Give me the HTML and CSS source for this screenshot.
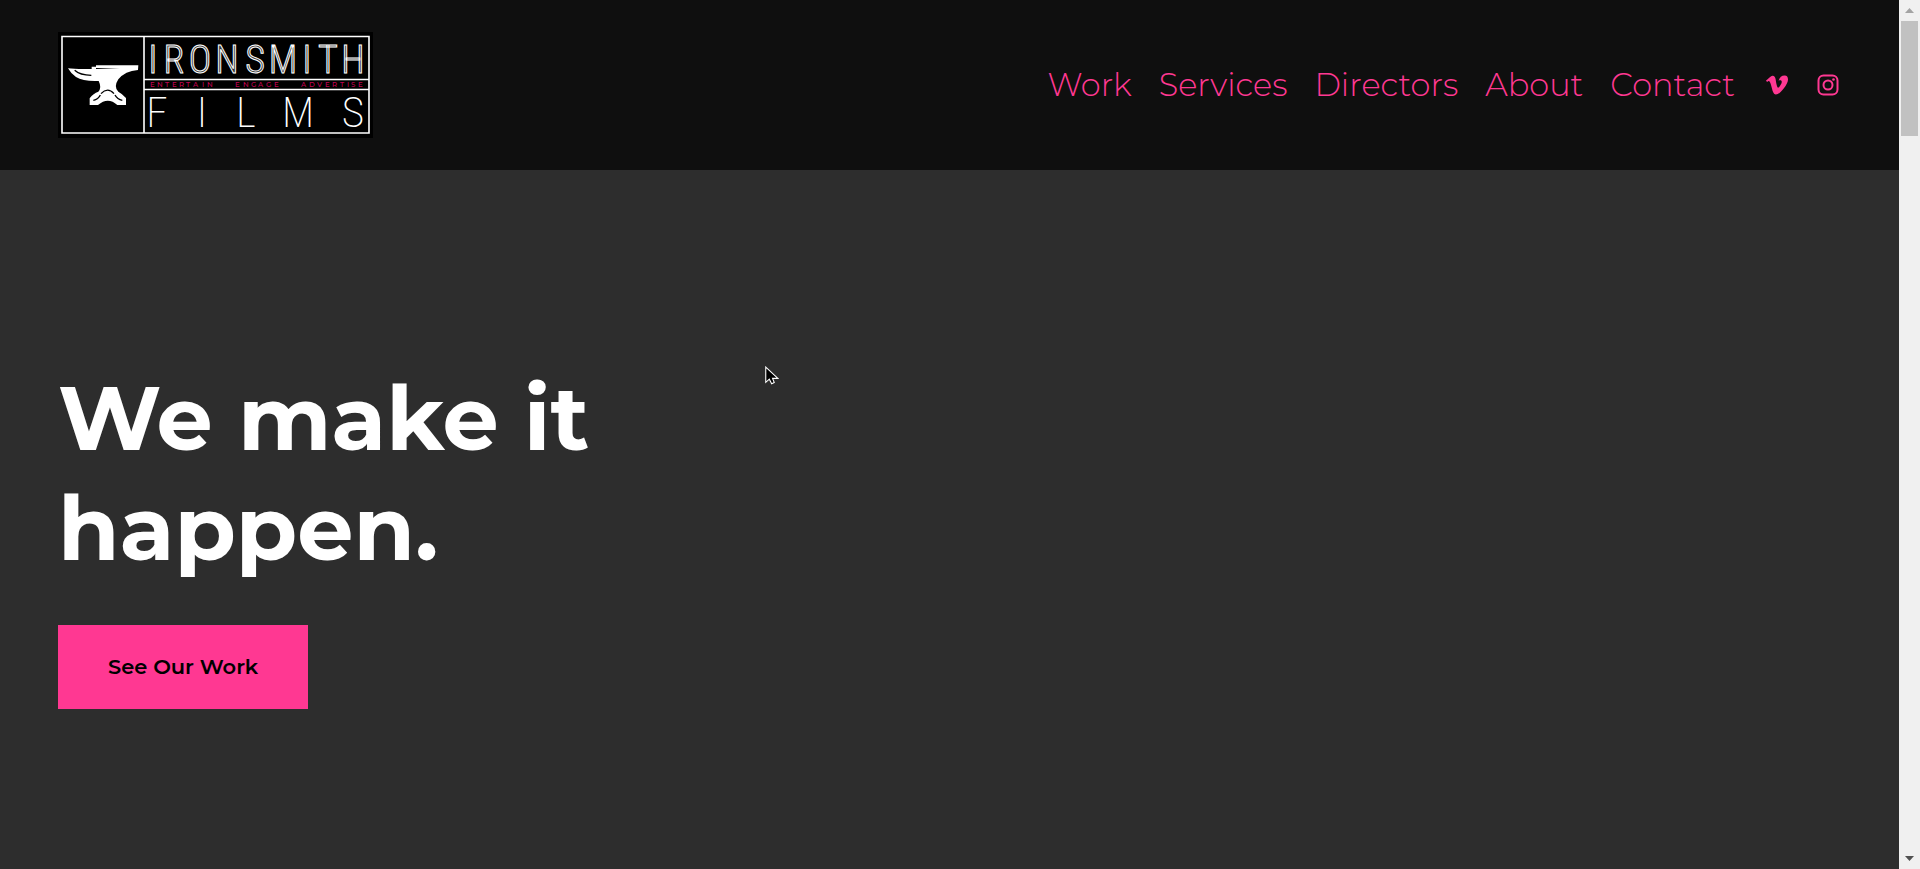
FILE: index.html
```
<!DOCTYPE html>
<html lang="en">
<head>
	<meta charset="UTF-8">
	<meta name="viewport" content="width=device-width, initial-scale=1.0">
	<title>Ironsmith Films</title>
	<link rel="stylesheet" href="styles.css">
</head>
<body>
	<div class="page">
		<header class="header">
			<a class="logo" href="#" aria-label="Ironsmith Films">
				<svg viewBox="0 0 315 106">
					<rect width="315" height="106" fill="#000"/>
					<path d="M4 4.500h307v96.500h-307zM86 4v97M86 47.500h225M86 57.500h225" fill="none" stroke="#fff" stroke-width="1.600"/>
					<!-- anvil -->
					<g transform="scale(.3333) translate(-24 -38)">
						<path fill="#fff" d="M54 147Q75 150 125 149V142H138V138H265L264 152Q225 155 205 180Q190 203 205 217Q218 224 228 236V257H202Q174 231 144 257H119V237Q130 222 145 217Q156 205 146 185Q100 187 78 173Q62 162 54 147Z"/>
						<path fill="none" stroke="#000" stroke-width="4" d="M74 153Q90 168 124 168M130 243Q145 240 151 227M153 223Q173 202 192 223M195 227Q202 240 217 243"/>
						<path d="M138 146L210 149L138 149Z"/>
					</g>
					<text class="logo-name" y="41" x="95 116 142 169 197 225 249 270 295">IRONSMITH</text>
					<text class="logo-tag" y="55" x="92 99 107 114 121 128 135 144 149">ENTERTAIN</text>
					<text class="logo-tag" y="55" x="177 185 193 200 208 216">ENGAGE</text>
					<text class="logo-tag" y="55" x="243 251 259 267 274 282 289 293 300">ADVERTISE</text>
					<text class="logo-films" y="95" x="99 144 188 240 295">FILMS</text>
				</svg>
			</a>
			<nav class="nav">
				<a href="#">Work</a>
				<a href="#">Services</a>
				<a href="#">Directors</a>
				<a href="#">About</a>
				<a href="#">Contact</a>
				<div class="social">
					<a href="#" aria-label="Vimeo">
						<svg viewBox="0 0 24 24" fill="currentColor"><path d="M23.977 6.416c-.105 2.338-1.739 5.543-4.894 9.609-3.268 4.247-6.026 6.370-8.290 6.370-1.409 0-2.578-1.294-3.553-3.881L5.322 11.400C4.603 8.816 3.834 7.522 3.010 7.522c-.179 0-.806.378-1.881 1.132L0 7.197c1.185-1.044 2.351-2.084 3.501-3.128C5.080 2.701 6.266 1.984 7.055 1.910c1.867-.180 3.016 1.100 3.447 3.838.465 2.953.789 4.789.971 5.507.539 2.450 1.131 3.674 1.776 3.674.502 0 1.256-.796 2.265-2.385 1.004-1.589 1.540-2.797 1.612-3.628.144-1.371-.395-2.061-1.614-2.061-.574 0-1.167.121-1.777.391 1.186-3.868 3.434-5.757 6.762-5.637 2.473.060 3.628 1.664 3.493 4.797z"/></svg>
					</a>
					<a href="#" aria-label="Instagram">
						<svg viewBox="0 0 22 22" fill="none" stroke="currentColor" stroke-width="2"><rect x="1.500" y="1.500" width="19" height="19" rx="5"/><circle cx="11" cy="11" r="4.500"/><circle cx="16.500" cy="5.500" r="1.300" fill="currentColor" stroke="none"/></svg>
					</a>
				</div>
			</nav>
		</header>
		<main class="hero">
			<h1>We make it<br>happen.</h1>
			<a class="button" href="#">See Our Work</a>
		</main>
	</div>
	<div class="scrollbar">
		<button aria-label="Scroll up"><svg viewBox="0 0 9 5"><path d="M0 5L4.500 0L9 5z" fill="#a3a3a3"/></svg></button>
		<div class="thumb"></div>
		<button class="down" aria-label="Scroll down"><svg viewBox="0 0 9 5"><path d="M0 0L4.500 5L9 0z" fill="#505050"/></svg></button>
	</div>
	<svg class="cursor" viewBox="0 0 13 18"><path d="M.7 1V15.200L4 12.200L6.200 16.500L8.600 15.400L7 11.500H12z" fill="#000" stroke="#fff"/></svg>
</body>
</html>
```
FILE: styles.css
```
* {
	box-sizing: border-box;
}
body {
	margin: 0;
	display: flex;
	min-height: 100vh;
	font-family: Montserrat, Inter, sans-serif;
	background-color: #2d2d2d;
}
.page {
	flex: 1;
	display: flex;
	flex-direction: column;
}
.header {
	display: flex;
	justify-content: space-between;
	align-items: center;
	padding: 32px 58px;
	background-color: #0f0f0f;
}
.logo svg {
	display: block;
	width: 315px;
}
.logo-name, .logo-films {
	font-family: "Roboto Condensed", "Liberation Sans Narrow", Roboto, sans-serif;
	text-anchor: middle;
}
.logo-name {
	font-size: 38px;
	font-weight: 300;
	fill: #333;
	stroke: #fff;
}
.logo-films {
	font-size: 43px;
	font-weight: 200;
	fill: #fff;
}
.logo-tag {
	font-size: 7px;
	font-weight: 500;
	fill: #c00050;
}
.nav {
	display: flex;
	align-items: center;
	gap: 27px;
}
.nav a {
	color: #ff3892;
	font-size: 32px;
	font-weight: 300;
	line-height: 40px;
	text-decoration: none;
}
.social {
	display: flex;
	gap: 29px;
	padding: 0 2px 0 4px;
}
.social svg {
	display: block;
	width: 22px;
}
.hero {
	flex: 1;
	display: flex;
	flex-direction: column;
	justify-content: center;
	align-items: flex-start;
	gap: 42px;
	padding: 32px 58px 0;
}
.hero h1 {
	margin: 0;
	color: #fff;
	font-size: 89px;
	font-weight: 700;
	line-height: 110px;
}
.button {
	padding: 30px 50px;
	background-color: #ff3892;
	color: #000;
	font-size: 21px;
	font-weight: 600;
	line-height: 24px;
	text-decoration: none;
}
.scrollbar {
	width: 21px;
	display: flex;
	flex-direction: column;
	align-items: center;
	background-color: #f0f0f0;
}
.scrollbar button {
	width: 17px;
	height: 21px;
	padding: 4px;
	border: none;
	background-color: transparent;
}
.scrollbar svg {
	display: block;
	width: 9px;
}
.scrollbar .down {
	margin-top: auto;
}
.thumb {
	width: 17px;
	height: 115px;
	background-color: #c1c1c1;
}
.cursor {
	position: absolute;
	left: 765px;
	top: 366px;
	width: 14px;
}
```
